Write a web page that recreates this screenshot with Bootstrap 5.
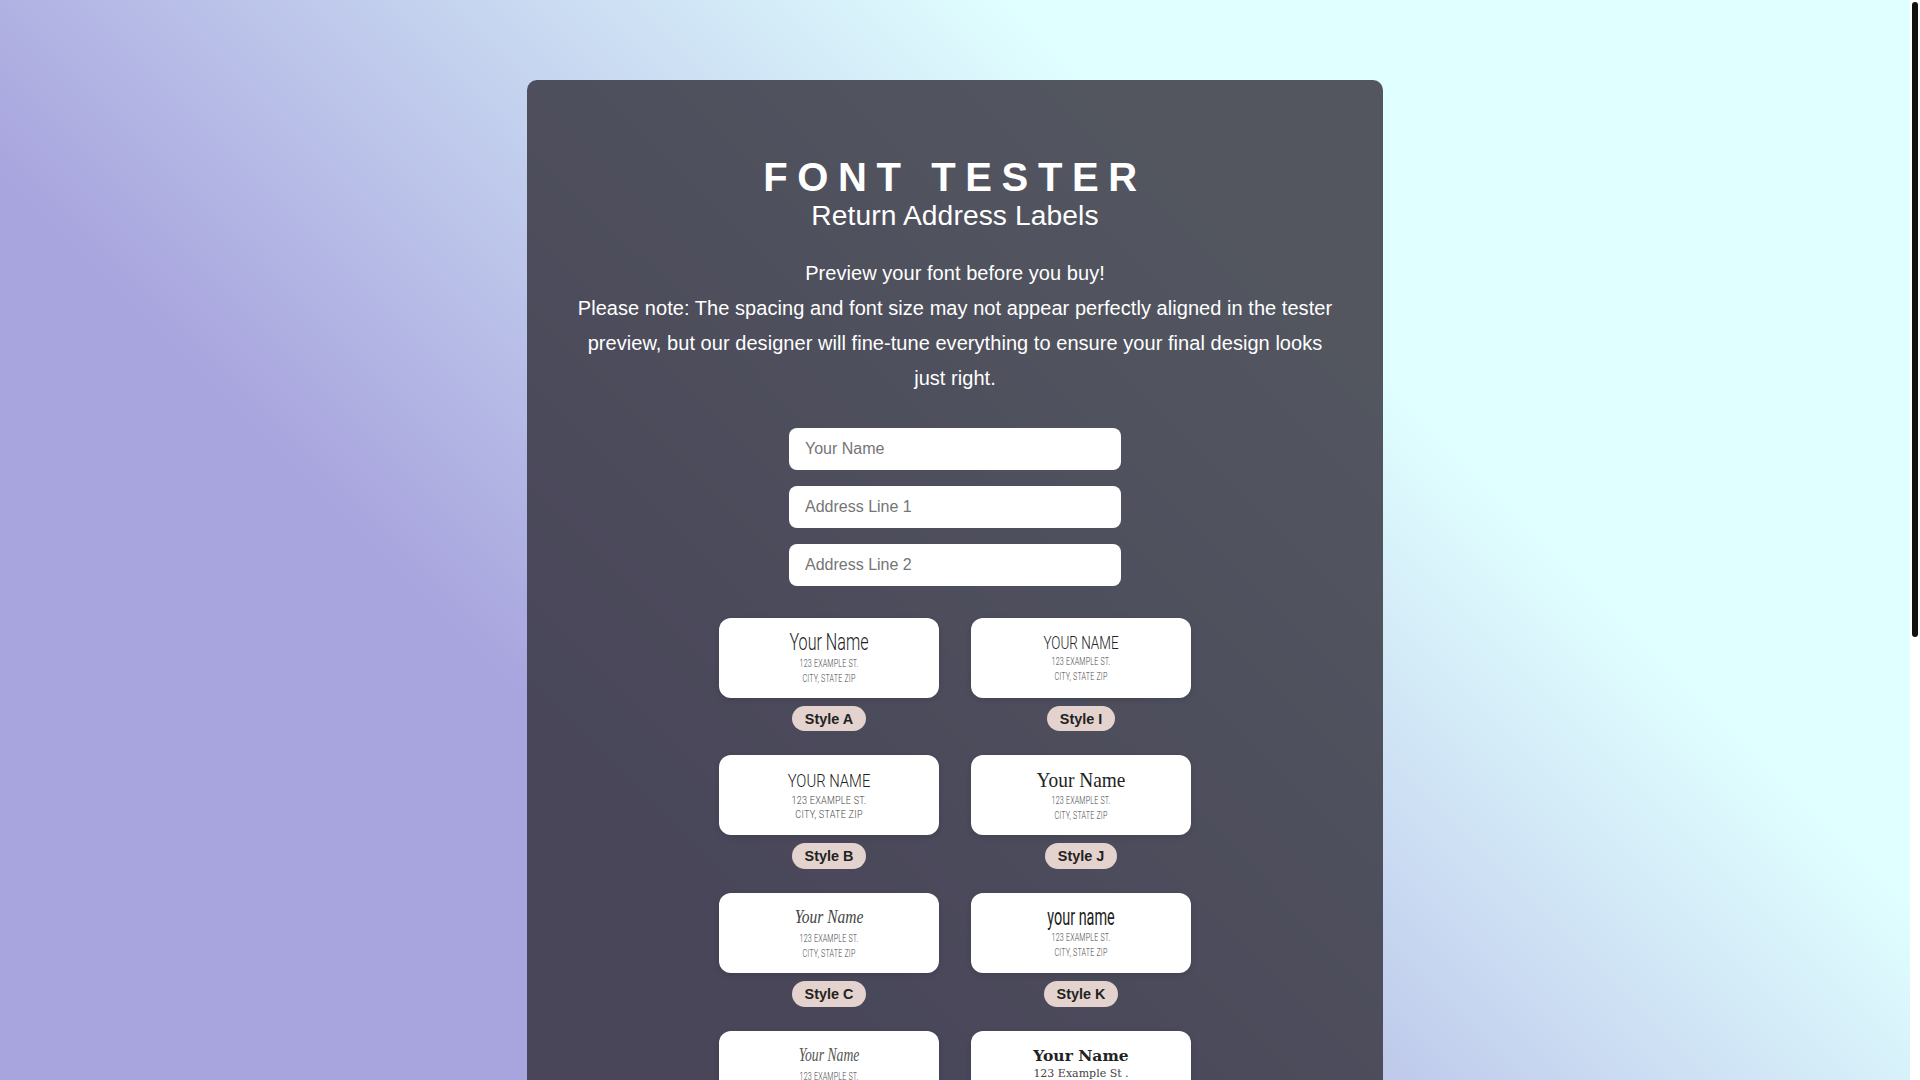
<!DOCTYPE html>
<html lang="en">
<head>
<meta charset="utf-8">
<title>Font Tester</title>
<link href="https://cdn.jsdelivr.net/npm/bootstrap@5.3.0/dist/css/bootstrap.min.css" rel="stylesheet">
<style>
html{background:#fff linear-gradient(45deg,#a8a4de 30%,#e0ffff 70%) no-repeat fixed;background-size:calc(100% - 10px) 100%;}
body{background:transparent;font-family:"Liberation Sans",Arial,sans-serif;padding:80px 10px 80px 0;}
.scroll-strip{position:fixed;top:0;right:0;bottom:0;width:10px;background:#fff;padding:2px;}
.scroll-thumb{height:635px;background:#111;border-radius:3px;}
.tester-panel{width:856px;background:rgba(52,50,61,.825);border-radius:10px;padding:75px 48px 60px;color:#fff;}
.tester-title{font-size:40px;font-weight:700;letter-spacing:9.6px;line-height:44px;margin:0;}
.tester-sub{font-size:28.2px;font-weight:400;line-height:33px;margin:0 0 23.5px;letter-spacing:.1px;}
.tester-copy{font-size:20px;line-height:35px;margin:0 0 32.3px;letter-spacing:.05px;}
.tester-field{width:332px;height:42px;border:0;border-radius:8px;padding:0 16px;font-size:16px;font-family:"Liberation Sans",Arial,sans-serif;}
.tester-field::placeholder{color:#757575;}
.style-grid{grid-template-columns:220px 220px;column-gap:32px;row-gap:24px;justify-content:center;margin-top:32px;}
.addr-label{width:220px;height:80px;border-radius:12px;background:#fff;box-shadow:0 2px 6px rgba(0,0,0,.12);color:#222;overflow:hidden;}
.nm{display:block;white-space:nowrap;margin-bottom:1px;}
.ad{display:block;white-space:nowrap;font-family:Roboto,sans-serif;font-weight:300;font-size:11.5px;line-height:15px;color:#444;transform:scaleX(.62);letter-spacing:.3px;}
.pill{font-size:14.4px;font-weight:700;line-height:19.6px;padding:4px 12.8px 2px;border-radius:999px;background:#e3d2cd;color:#222;}
.n-a{font-family:Roboto,sans-serif;font-weight:300;font-size:23px;line-height:25px;transform:scaleX(.7);}
.n-b{font-family:Roboto,sans-serif;font-weight:300;font-size:19px;line-height:25px;transform:scaleX(.78);}
.n-c{font-family:"Liberation Serif",serif;font-style:italic;font-size:18px;line-height:25px;transform:scaleX(.86);color:#444;}
.n-d{font-family:"Liberation Serif",serif;font-style:italic;font-size:18px;line-height:25px;transform:scaleX(.76);color:#555;}
.n-i{font-family:Roboto,sans-serif;font-weight:300;font-size:19px;line-height:21px;transform:scaleX(.71);}
.n-j{font-family:"Liberation Serif",serif;font-size:22px;line-height:25px;transform:scaleX(.88);}
.n-k{font-family:Roboto,sans-serif;font-size:24px;line-height:23px;transform:scaleX(.6);text-transform:lowercase;}
.n-l{font-family:"DejaVu Serif",serif;font-weight:700;font-size:15.5px;line-height:20px;}
.ad-b{font-size:10.5px;line-height:14px;transform:scaleX(.86);}
.ad-l{font-family:"DejaVu Serif",serif;font-size:11px;line-height:14px;transform:none;letter-spacing:0;}
</style>
</head>
<body>
<main class="tester-panel mx-auto text-center">
  <h1 class="tester-title">FONT TESTER</h1>
  <h2 class="tester-sub">Return Address Labels</h2>
  <p class="tester-copy">Preview your font before you buy!<br>Please note: The spacing and font size may not appear perfectly aligned in the tester preview, but our designer will fine-tune everything to ensure your final design looks just right.</p>
  <div class="d-flex flex-column align-items-center gap-3">
    <input class="form-control tester-field" placeholder="Your Name">
    <input class="form-control tester-field" placeholder="Address Line 1">
    <input class="form-control tester-field" placeholder="Address Line 2">
  </div>
  <div class="d-grid style-grid">
    <div class="d-flex flex-column align-items-center gap-2"><div class="addr-label d-flex flex-column justify-content-center"><span class="nm n-a">Your Name</span><span class="ad">123 EXAMPLE ST.</span><span class="ad">CITY, STATE ZIP</span></div><span class="pill">Style A</span></div>
    <div class="d-flex flex-column align-items-center gap-2"><div class="addr-label d-flex flex-column justify-content-center"><span class="nm n-i">YOUR NAME</span><span class="ad">123 EXAMPLE ST.</span><span class="ad">CITY, STATE ZIP</span></div><span class="pill">Style I</span></div>
    <div class="d-flex flex-column align-items-center gap-2"><div class="addr-label d-flex flex-column justify-content-center"><span class="nm n-b">YOUR NAME</span><span class="ad ad-b">123 EXAMPLE ST.</span><span class="ad ad-b">CITY, STATE ZIP</span></div><span class="pill">Style B</span></div>
    <div class="d-flex flex-column align-items-center gap-2"><div class="addr-label d-flex flex-column justify-content-center"><span class="nm n-j">Your Name</span><span class="ad">123 EXAMPLE ST.</span><span class="ad">CITY, STATE ZIP</span></div><span class="pill">Style J</span></div>
    <div class="d-flex flex-column align-items-center gap-2"><div class="addr-label d-flex flex-column justify-content-center"><span class="nm n-c">Your Name</span><span class="ad">123 EXAMPLE ST.</span><span class="ad">CITY, STATE ZIP</span></div><span class="pill">Style C</span></div>
    <div class="d-flex flex-column align-items-center gap-2"><div class="addr-label d-flex flex-column justify-content-center"><span class="nm n-k">Your Name</span><span class="ad">123 EXAMPLE ST.</span><span class="ad">CITY, STATE ZIP</span></div><span class="pill">Style K</span></div>
    <div class="d-flex flex-column align-items-center gap-2"><div class="addr-label d-flex flex-column justify-content-center"><span class="nm n-d">Your Name</span><span class="ad">123 EXAMPLE ST.</span><span class="ad">CITY, STATE ZIP</span></div><span class="pill">Style D</span></div>
    <div class="d-flex flex-column align-items-center gap-2"><div class="addr-label d-flex flex-column justify-content-center"><span class="nm n-l">Your Name</span><span class="ad ad-l">123 Example St .</span><span class="ad ad-l">City, State Zip</span></div><span class="pill">Style L</span></div>
    <div class="d-flex flex-column align-items-center gap-2"><div class="addr-label d-flex flex-column justify-content-center"><span class="nm n-a">Your Name</span><span class="ad">123 EXAMPLE ST.</span><span class="ad">CITY, STATE ZIP</span></div><span class="pill">Style E</span></div>
    <div class="d-flex flex-column align-items-center gap-2"><div class="addr-label d-flex flex-column justify-content-center"><span class="nm n-i">YOUR NAME</span><span class="ad">123 EXAMPLE ST.</span><span class="ad">CITY, STATE ZIP</span></div><span class="pill">Style M</span></div>
    <div class="d-flex flex-column align-items-center gap-2"><div class="addr-label d-flex flex-column justify-content-center"><span class="nm n-j">Your Name</span><span class="ad">123 EXAMPLE ST.</span><span class="ad">CITY, STATE ZIP</span></div><span class="pill">Style F</span></div>
    <div class="d-flex flex-column align-items-center gap-2"><div class="addr-label d-flex flex-column justify-content-center"><span class="nm n-c">Your Name</span><span class="ad">123 EXAMPLE ST.</span><span class="ad">CITY, STATE ZIP</span></div><span class="pill">Style N</span></div>
    <div class="d-flex flex-column align-items-center gap-2"><div class="addr-label d-flex flex-column justify-content-center"><span class="nm n-k">Your Name</span><span class="ad">123 EXAMPLE ST.</span><span class="ad">CITY, STATE ZIP</span></div><span class="pill">Style G</span></div>
    <div class="d-flex flex-column align-items-center gap-2"><div class="addr-label d-flex flex-column justify-content-center"><span class="nm n-a">Your Name</span><span class="ad">123 EXAMPLE ST.</span><span class="ad">CITY, STATE ZIP</span></div><span class="pill">Style O</span></div>
    <div class="d-flex flex-column align-items-center gap-2"><div class="addr-label d-flex flex-column justify-content-center"><span class="nm n-d">Your Name</span><span class="ad">123 EXAMPLE ST.</span><span class="ad">CITY, STATE ZIP</span></div><span class="pill">Style H</span></div>
    <div class="d-flex flex-column align-items-center gap-2"><div class="addr-label d-flex flex-column justify-content-center"><span class="nm n-b">YOUR NAME</span><span class="ad ad-b">123 EXAMPLE ST.</span><span class="ad ad-b">CITY, STATE ZIP</span></div><span class="pill">Style P</span></div>
  </div>
</main>
<div class="scroll-strip"><div class="scroll-thumb"></div></div>
<script src="https://cdn.jsdelivr.net/npm/bootstrap@5.3.0/dist/js/bootstrap.bundle.min.js"></script>
</body>
</html>
